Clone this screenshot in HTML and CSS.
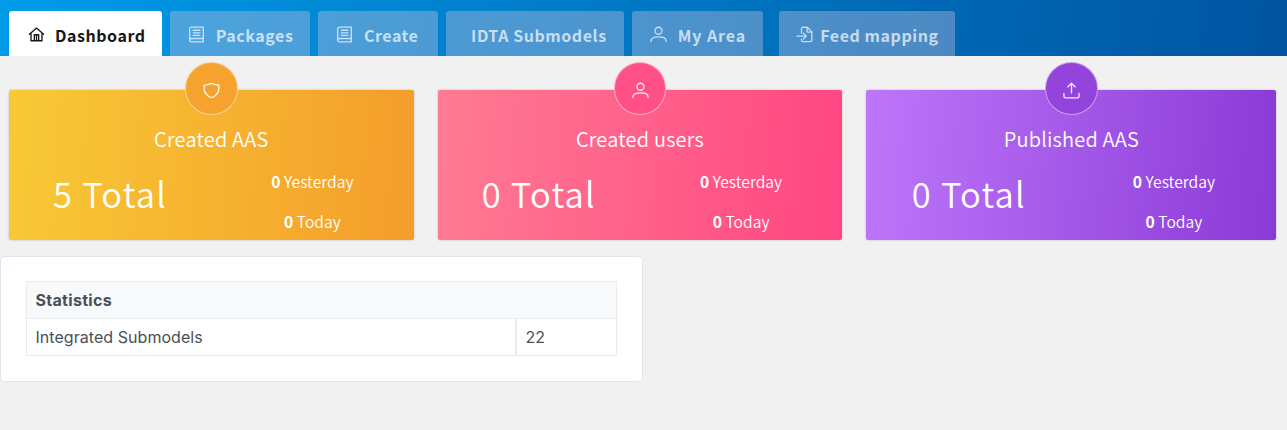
FILE: index.html
```html
<!DOCTYPE html>
<html lang="en">
<head>
<meta charset="utf-8">
<title>Dashboard</title>
<link rel="stylesheet" href="styles.css">
</head>
<body>
<nav class="tabs">
  <a class="tab tab-home active"><svg class="icon" viewBox="0 0 18 18"><path d="M1.5 8.8 9 2.2l7.5 6.6M3.2 7.6v8h11.6v-8M6.7 15.6V9.3h4.6v6.3M9 9.5v6"/></svg><span>Dashboard</span></a>
  <a class="tab tab-packages"><svg class="icon" viewBox="0 0 18 18"><path d="M16.200 13.200V1.200H3.500A1.700 1.700 0 0 0 1.800 2.900V15.100A1.700 1.700 0 0 0 3.500 16.800H16.200V13.200H3.500A1.700 1.700 0 0 0 1.800 14.900M5.500 4.500h7.200M5.500 7.200h7.200M5.500 9.900h7.200"/></svg><span>Packages</span></a>
  <a class="tab tab-create"><svg class="icon" viewBox="0 0 18 18"><path d="M16.200 13.200V1.200H3.500A1.700 1.700 0 0 0 1.800 2.900V15.100A1.700 1.700 0 0 0 3.500 16.800H16.200V13.200H3.500A1.700 1.700 0 0 0 1.800 14.900M5.500 4.500h7.200M5.500 7.200h7.200M5.500 9.900h7.200"/></svg><span>Create</span></a>
  <a class="tab tab-submodels"><span>IDTA Submodels</span></a>
  <a class="tab tab-area"><svg class="icon" viewBox="0 0 18 18"><circle cx="9" cy="5" r="3.700"/><path d="M1 16.500v-1c0-2.200 2.600-3.900 8-3.900s8 1.700 8 3.900v1"/></svg><span>My Area</span></a>
  <a class="tab tab-feed"><svg class="icon" viewBox="0 0 18 18"><path d="M5.800 7.500V2.900c0-1 .6-1.600 1.600-1.600h4.500l4.900 4.900v8.700c0 1-.6 1.600-1.600 1.600H7.400c-1 0-1.600-.6-1.600-1.600v-1M11.700 1.500v4.900h4.900M.9 10.700h9.800M7.800 7.600l3.100 3.100-3.100 3.100"/></svg><span>Feed mapping</span></a>
</nav>
<main>
  <section class="cards">
    <article class="card gold">
      <div class="badge"><svg class="icon" viewBox="0 0 18 18"><path d="M9 1.500c2.500 1.100 4.800 1.700 7.800 1.800v3.500c0 4.500-3.400 7.900-7.800 9.900-4.400-2-7.800-5.400-7.800-9.900V3.300C4.200 3.200 6.500 2.600 9 1.500z"/></svg></div>
      <h2><span>Created AAS</span></h2>
      <div class="figures"><div class="total"><span>5 Total</span></div><div class="days"><p><b>0</b> Yesterday</p><p><b>0</b> Today</p></div></div>
    </article>
    <article class="card pink">
      <div class="badge"><svg class="icon" viewBox="0 0 18 18"><circle cx="9" cy="5" r="3.700"/><path d="M1 16.500v-1c0-2.200 2.600-3.900 8-3.900s8 1.700 8 3.900v1"/></svg></div>
      <h2><span>Created users</span></h2>
      <div class="figures"><div class="total"><span>0 Total</span></div><div class="days"><p><b>0</b> Yesterday</p><p><b>0</b> Today</p></div></div>
    </article>
    <article class="card violet">
      <div class="badge"><svg class="icon" viewBox="0 0 18 18"><path d="M9 11.500V1.500M5 5.200l4-3.900 4 3.900M1 12v3c0 1.100.6 1.800 1.800 1.800h12.400c1.200 0 1.800-.7 1.800-1.800v-3"/></svg></div>
      <h2><span>Published AAS</span></h2>
      <div class="figures"><div class="total"><span>0 Total</span></div><div class="days"><p><b>0</b> Yesterday</p><p><b>0</b> Today</p></div></div>
    </article>
  </section>
  <section class="panel">
    <table class="stats">
      <thead><tr><th colspan="2">Statistics</th></tr></thead>
      <tbody><tr><td>Integrated Submodels</td><td class="value">22</td></tr></tbody>
    </table>
  </section>
</main>
</body>
</html>
```
FILE: styles.css
```css
* { box-sizing: border-box; }
body {
  margin: 0;
  background: #f1f1f1;
  font-family: "Noto Sans CJK SC", "Noto Sans", sans-serif;
}
.tabs {
  display: flex;
  height: 56px;
  padding: 10.500px 0 0 9px;
  background: linear-gradient(100deg, #009ce8 0%, #0054a0 100%);
}
.tab {
  display: flex;
  align-items: center;
  gap: 10.500px;
  height: 45.500px;
  margin-right: 8.200px;
  padding: 3px 0 0 18.500px;
  border-radius: 3px 3px 0 0;
  background: rgba(190, 190, 220, .4);
  color: rgba(255, 255, 255, .7);
  font-size: 16px;
  font-weight: 700;
  line-height: 24px;
  letter-spacing: .55px;
  white-space: nowrap;
}
.tab.active { background: #fff; color: #171717; }
.tab-home { width: 152.500px; }
.tab-packages { width: 140.500px; }
.tab-create { width: 119.500px; padding-left: 18px; }
.tab-submodels { width: 178px; padding-left: 25px; }
.tab-area { width: 131px; margin-right: 16px; padding-left: 18px; letter-spacing: .9px; }
.tab-feed { width: 176px; padding-left: 16.500px; gap: 7.500px; }
.icon {
  flex: none;
  width: 17px;
  height: 17px;
  fill: none;
  stroke: currentColor;
  stroke-width: 1.400;
  stroke-linecap: round;
  stroke-linejoin: round;
}
.tab .icon { margin-top: -1px; }
.cards {
  display: grid;
  grid-template-columns: 404.500px 404.500px 410px;
  column-gap: 24.200px;
  padding: 34px 0 0 9px;
}
.card {
  position: relative;
  height: 150px;
  padding-top: 34px;
  border-radius: 2px;
  color: #fff;
  box-shadow: 0 0 2px rgba(60, 80, 120, .4);
}
.gold { --dot: #f5a32e; background: linear-gradient(94deg, #f8c936, #f49d2b); }
.pink { --dot: #ff5088; background: linear-gradient(94deg, #ff7b93, #ff4682); }
.violet { --dot: #9345db; background: linear-gradient(94deg, #bd76fa, #8b3ad6); }
.badge {
  position: absolute;
  top: -28px;
  left: calc(50% - 26px);
  display: grid;
  place-items: center;
  width: 52.500px;
  height: 52.500px;
  padding-top: 5px;
  border: 1px solid rgba(255, 255, 255, .5);
  border-radius: 50%;
  background: var(--dot);
}
.badge .icon { opacity: .9; }
.card h2 {
  margin: 0;
  text-align: center;
  font-size: 20px;
  font-weight: 350;
  line-height: 30px;
  letter-spacing: .2px;
}
.figures { display: grid; grid-template-columns: 1fr 1fr; padding-top: 7px; }
.total {
  text-align: center;
  font-size: 34.500px;
  font-weight: 350;
  line-height: 64px;
  letter-spacing: 1.200px;
}
.days { padding-top: 1px; text-align: center; font-size: 15.700px; font-weight: 350; }
.days b { font-weight: 700; }
.days p { margin: 0; line-height: 39.500px; }
.panel {
  width: 642.500px;
  height: 126px;
  margin-top: 15.500px;
  padding: 24px 25px 25px 25px;
  border: 1px solid #dfe6ed;
  border-radius: 4px;
  background: #fff;
}
.stats {
  width: 591px;
  border-collapse: collapse;
  color: #495057;
  font-family: Inter, sans-serif;
  font-size: 16px;
  line-height: 24px;
}
.stats th, .stats td { height: 37px; padding: 0 9px 0 8.500px; border: 1px solid #e9ecef; text-align: left; }
.stats th { background: #f8f9fa; font-weight: 700; letter-spacing: .3px; }
.stats td { letter-spacing: .05px; }
.stats .value { width: 101px; padding-left: 9px; border-left-width: 2px; }
```
